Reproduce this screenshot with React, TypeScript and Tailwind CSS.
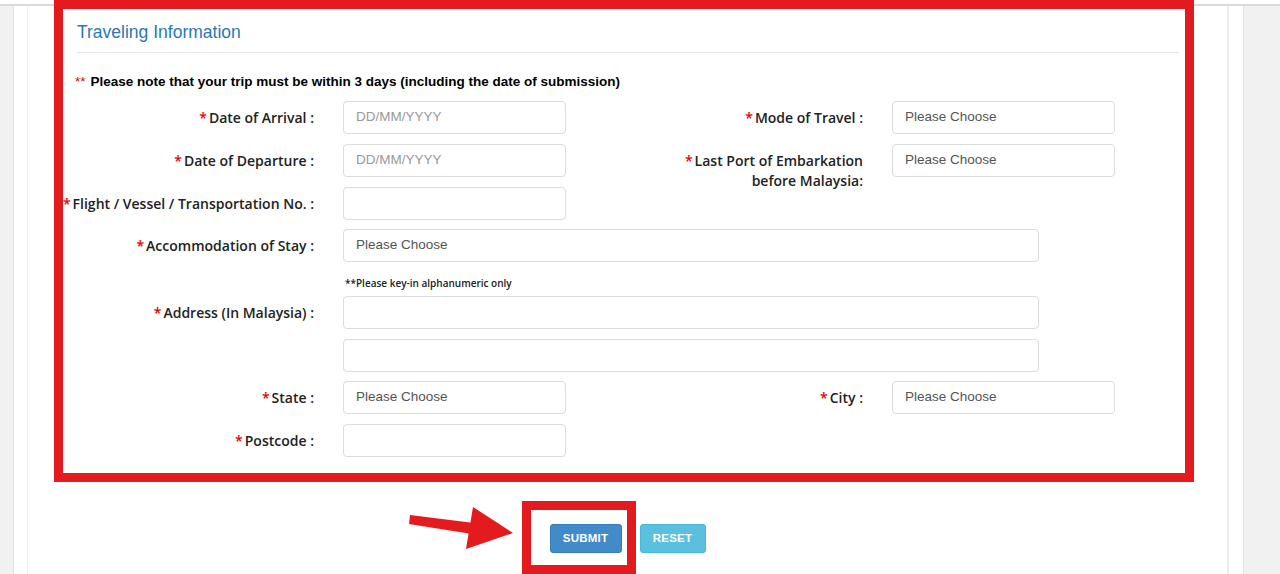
import type { ReactNode } from "react";

const labelFont = "font-['Open_Sans',sans-serif]";
const arial = "font-['Liberation_Sans',Arial,sans-serif]";

function Label({ children, width, lines }: { children: ReactNode; width: string; lines?: ReactNode }) {
  return (
    <div className={`flex justify-end shrink-0 ${width} pt-[7px]`}>
      <div className={`${labelFont} text-[14px] leading-[20px] font-semibold text-[#222] whitespace-nowrap text-right`}>
        <span className="text-[#e50000] mr-[2px]">*</span>
        {children}
        {lines}
      </div>
    </div>
  );
}

function Field({ value, placeholder, width = "w-[223px]" }: { value?: string; placeholder?: string; width?: string }) {
  return (
    <div
      className={`ml-[29px] shrink-0 ${width} h-[33px] border border-[#dcdcdc] rounded-[4px] bg-white flex items-center px-[12px] ${arial} text-[13.5px]`}
    >
      {value && <span className="text-[#555]">{value}</span>}
      {placeholder && <span className="text-[#999]">{placeholder}</span>}
    </div>
  );
}

export default function App() {
  return (
    <div className="w-[1280px] h-[574px] bg-white overflow-hidden">
      <div className="h-[4px]" />
      <div className="flex h-[570px] border-t-2 border-[#dadada]">
        <div className="w-[14px] shrink-0 bg-[#f1f1f1] border-r border-[#e3e3e3]" />
        <div className="w-[14px] shrink-0 border-r border-[#ececec]" />

        {/* main panel */}
        <main className="relative flex-1">
          <section className="relative z-10 -mt-[6px] ml-[26px] w-[1140px] h-[482px] border-[9px] border-[#e41b1e] bg-white">
            <div className="pl-[14px] pr-[6px] pt-[13px]">
              <h3 className={`${arial} text-[17.5px] leading-[20px] text-[#2a78b6]`}>Traveling Information</h3>
              <div className="mt-[10px] h-px bg-[#e8e8e8]" />
            </div>

            <p className={`mt-[21px] pl-[12px] ${arial} text-[13.5px] leading-[16px] font-bold text-black`}>
              <span className="text-[#e50000] font-normal">**</span>
              <span className="ml-[5px]">Please note that your trip must be within 3 days (including the date of submission)</span>
            </p>

            <div className="pl-[14px]">
              <div className="flex items-start h-[33px] mt-[11px]">
                <Label width="w-[237px]">Date of Arrival :</Label>
                <Field placeholder="DD/MM/YYYY" />
                <Label width="w-[297px]">Mode of Travel :</Label>
                <Field value="Please Choose" />
              </div>

              <div className="flex items-start h-[33px] mt-[10px]">
                <Label width="w-[237px]">Date of Departure :</Label>
                <Field placeholder="DD/MM/YYYY" />
                <Label
                  width="w-[297px]"
                  lines={
                    <>
                      <br />
                      before Malaysia:
                    </>
                  }
                >
                  Last Port of Embarkation
                </Label>
                <Field value="Please Choose" />
              </div>

              <div className="flex items-start h-[33px] mt-[10px]">
                <Label width="w-[237px]">Flight / Vessel / Transportation No. :</Label>
                <Field />
              </div>

              <div className="flex items-start h-[33px] mt-[9px]">
                <Label width="w-[237px]">Accommodation of Stay :</Label>
                <Field value="Please Choose" width="w-[696px]" />
              </div>

              <p className={`ml-[268px] mt-[14px] ${labelFont} text-[10px] leading-[14px] font-semibold text-[#222]`}>
                **Please key-in alphanumeric only
              </p>

              <div className="flex items-start h-[33px] mt-[6px]">
                <Label width="w-[237px]">Address (In Malaysia) :</Label>
                <Field width="w-[696px]" />
              </div>

              <div className="flex items-start h-[33px] mt-[10px]">
                <div className="w-[237px] shrink-0" />
                <Field width="w-[696px]" />
              </div>

              <div className="flex items-start h-[33px] mt-[9px]">
                <Label width="w-[237px]">State :</Label>
                <Field value="Please Choose" />
                <Label width="w-[297px]">City :</Label>
                <Field value="Please Choose" />
              </div>

              <div className="flex items-start h-[33px] mt-[10px]">
                <Label width="w-[237px]">Postcode :</Label>
                <Field />
              </div>
            </div>
          </section>

          {/* buttons */}
          <div className="mt-[42px] flex justify-center gap-[18px]">
            <button
              className={`w-[72px] h-[29px] rounded-[3px] bg-[#428bca] border border-[#357ebd] text-white ${arial} text-[11.5px] font-bold tracking-[0.2px]`}
            >
              SUBMIT
            </button>
            <button
              className={`w-[66px] h-[29px] rounded-[3px] bg-[#5bc0de] border border-[#46b8da] text-white ${arial} text-[11.5px] font-bold tracking-[0.2px]`}
            >
              RESET
            </button>
          </div>

          {/* annotation: box around submit */}
          <div className="absolute left-[494px] top-[495px] w-[114px] h-[73px] border-[9px] border-[#e41b1e] pointer-events-none" />

          {/* annotation: arrow */}
          <svg className="absolute left-[380px] top-[499px] pointer-events-none" width="110" height="50" viewBox="0 0 110 50">
            <polygon points="2,10 66,18 64,29 1,19" fill="#e41b1e" />
            <polygon points="65,2 58,44 105,28" fill="#e41b1e" />
          </svg>
        </main>

        <div className="w-[16px] shrink-0 border-l-2 border-[#ececec]" />
        <div className="w-[37px] shrink-0 bg-[#f1f1f1] border-l border-[#e3e3e3]" />
      </div>
    </div>
  );
}
